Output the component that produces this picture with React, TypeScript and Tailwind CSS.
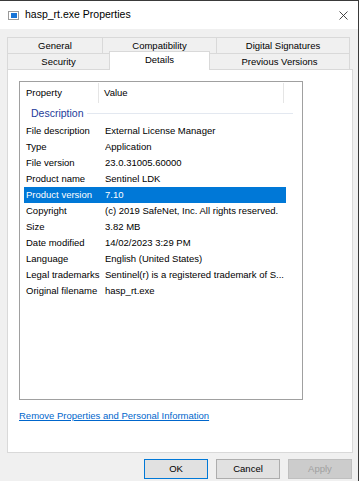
const rows: [string, string][] = [
  ['File description', 'External License Manager'],
  ['Type', 'Application'],
  ['File version', '23.0.31005.60000'],
  ['Product name', 'Sentinel LDK'],
  ['Product version', '7.10'],
  ['Copyright', '(c) 2019 SafeNet, Inc. All rights reserved.'],
  ['Size', '3.82 MB'],
  ['Date modified', '14/02/2023 3:29 PM'],
  ['Language', 'English (United States)'],
  ['Legal trademarks', 'Sentinel(r) is a registered trademark of S...'],
  ['Original filename', 'hasp_rt.exe'],
];

export default function App() {
  return (
    <div className="w-[361px] h-[481px] bg-white overflow-hidden font-['Liberation_Sans',Arial,sans-serif] text-[9.5px] text-black">
      <div className="w-[359px] h-full flex flex-col border-t border-r border-[#3a3a3a]">
        {/* Title bar */}
        <div className="h-[28px] shrink-0 bg-white flex items-center relative">
          <div className="ml-[8px] w-[11px] h-[9px] border border-[#9a9a9a] bg-white flex items-center justify-center">
            <div className="w-[6px] h-[5px] bg-[#1673d6]" />
          </div>
          <span className="ml-[6px] text-[10.5px] text-black">hasp_rt.exe Properties</span>
          <svg className="absolute right-[10px] top-[10px]" width="9" height="9" viewBox="0 0 9 9">
            <path d="M0.5 0.5 L8.5 8.5 M8.5 0.5 L0.5 8.5" stroke="#333" strokeWidth="0.9" />
          </svg>
        </div>

        {/* Body */}
        <div className="flex-1 bg-[#f0f0f0] pl-[7px] pt-[8px] flex flex-col">
          {/* Tabs row 1 */}
          <div className="flex h-[16px] text-center">
            <div className="w-[95px] border-t border-l border-[#d9d9d9] leading-[15px]">General</div>
            <div className="w-[114px] border-t border-l border-[#d9d9d9] leading-[15px]">Compatibility</div>
            <div className="w-[134px] border-t border-l border-r border-[#d9d9d9] leading-[15px]">Digital Signatures</div>
          </div>
          {/* Tabs row 2 */}
          <div className="flex h-[16px] items-end text-center">
            <div className="w-[102px] h-[16px] border-t border-l border-[#d9d9d9] leading-[15px]">Security</div>
            <div className="relative z-10 w-[101px] h-[19px] -mb-[1px] bg-white border-t border-l border-r border-[#d9d9d9] leading-[15px]">Details</div>
            <div className="w-[140px] h-[16px] border-t border-r border-[#d9d9d9] leading-[15px]">Previous Versions</div>
          </div>

          {/* Panel */}
          <div className="w-[346px] h-[384px] bg-white border border-[#d9d9d9] px-[11px] pt-[11px] flex flex-col">
            <div className="w-[284px] h-[319px] border border-[#a0a0a0] flex flex-col">
              {/* Header */}
              <div className="h-[22px] flex items-center">
                <div className="w-[79px] pl-[6px] h-[20px] leading-[20px] border-r border-[#e5e5e5]">Property</div>
                <div className="w-[185px] pl-[5px] h-[20px] leading-[20px] border-r border-[#e5e5e5]">Value</div>
              </div>
              {/* Group */}
              <div className="h-[19px] flex items-center pl-[11px] pr-[9px]">
                <span className="text-[#1e3c9a] text-[10.5px]">Description</span>
                <div className="flex-1 ml-[3px] h-px bg-[#e3e8f0]" />
              </div>
              {rows.map(([k, v]) => {
                const sel = k === 'Product version';
                return (
                  <div
                    key={k}
                    className={
                      'ml-[4px] w-[262px] h-[16px] flex items-center whitespace-nowrap ' +
                      (sel ? 'bg-[#0078d7] text-white' : '')
                    }
                  >
                    <div className="w-[81px] pl-[2px]">{k}</div>
                    <div className="flex-1 overflow-hidden">{v}</div>
                  </div>
                );
              })}
            </div>
            <a className="mt-[10px] text-[#0066cc] underline leading-[12px]">Remove Properties and Personal Information</a>
          </div>

          {/* Buttons */}
          <div className="flex justify-end gap-[8px] pr-[6px] mt-[6px]">
            <button className="w-[64px] h-[20px] bg-[#e1e1e1] border border-[#0078d7] text-[9.5px]">OK</button>
            <button className="w-[64px] h-[20px] bg-[#e1e1e1] border border-[#adadad] text-[9.5px]">Cancel</button>
            <button className="w-[64px] h-[20px] bg-[#cccccc] border border-[#bfbfbf] text-[#a0a0a0] text-[9.5px]">Apply</button>
          </div>
        </div>
      </div>
    </div>
  );
}
